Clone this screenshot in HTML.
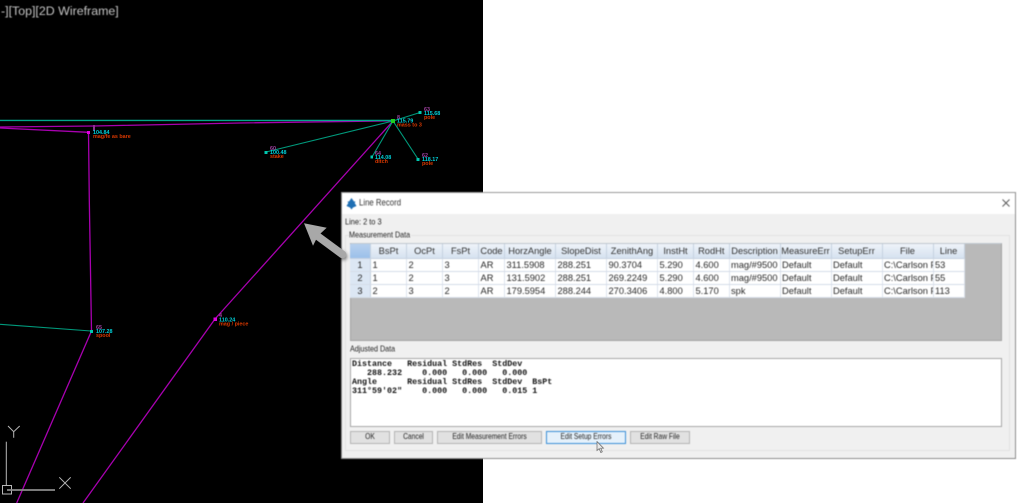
<!DOCTYPE html>
<html><head><meta charset="utf-8">
<style>
html,body{margin:0;padding:0;background:#fff;width:1024px;height:503px;overflow:hidden;font-family:"Liberation Sans",sans-serif}
#cad{position:absolute;left:0;top:0;width:482.5px;height:503px;background:#000}
#cad svg{position:absolute;left:0;top:0;filter:blur(.35px)}
#vp{position:absolute;left:1px;top:3px;font-size:12.4px;line-height:16px;color:#c4c4c4;white-space:nowrap;filter:blur(.4px)}
#dlg{position:absolute;left:341px;top:192px;width:673px;height:265px;background:#f0f0f0;border:1px solid #8c8c8c;border-top-color:#9a9a9a;filter:blur(.45px);color:#222}
#tb{position:absolute;left:0;top:0;width:673px;height:21px;background:#fff}
.t{position:absolute;white-space:nowrap;font-size:7.4px;line-height:10px;color:#222;transform:scaleY(1.15);transform-origin:0 50%}
#fs{position:absolute;left:3px;top:42px;width:665px;height:216px;border:1px solid #e2e2e2;box-sizing:border-box}
#gray{position:absolute;left:8px;top:50px;width:652px;height:98px;background:#b9b9b9;border:1px solid #a4a4a4;box-sizing:border-box;border-top:1px solid #c0c8d0}
table{position:absolute;left:-1px;top:0;border-collapse:collapse;table-layout:fixed;width:614px;background:#fff;font-size:9.3px;color:#2a2a2a}
th{height:14px;padding:0;font-weight:normal;text-align:center;background:linear-gradient(#eef3f9,#d6e2f0);border-right:1px solid #c6d2e0;border-bottom:1px solid #c6d2e0;overflow:hidden;white-space:nowrap;box-sizing:border-box;color:#333}
td{height:13px;padding:0 0 0 1.5px;border-right:1px solid #dde4ee;border-bottom:1px solid #d5dde8;overflow:hidden;white-space:nowrap;box-sizing:border-box;line-height:12px}
td.h{padding:0;text-align:center;background:#dce7f4;border-right:1px solid #c6d2e0}
th.c{background:linear-gradient(#b6d0ee,#9cc0ea)}
#ta{position:absolute;left:8px;top:165px;width:652px;height:69px;background:#fff;border:1px solid #a8a8a8;box-sizing:border-box}
#ta pre{margin:0;position:absolute;left:1px;top:1px;font-family:"Liberation Mono",monospace;font-weight:bold;font-size:8.36px;line-height:9.1px;color:#111}
.b{position:absolute;top:238px;height:13px;box-sizing:border-box;background:#e1e1e1;border:1px solid #b4b4b4;text-align:center;font-size:6.7px;line-height:12px;color:#222;white-space:nowrap}
.b span{display:inline-block;transform:scaleY(1.22)}
</style></head>
<body>
<div id="cad">
<svg width="483" height="503" viewBox="0 0 483 503" fill="none">
<g stroke="#a800b0" stroke-width="1.3">
<path d="M0 127 L94 126 L240 123 L393 120.8"/>
<path d="M0 128 L88.5 132.3"/>
<path d="M88.5 132 L89.3 200 L91.5 331 L16.7 503"/>
<path d="M83 503 L215 319 L393 121"/>
</g>
<path d="M0 120.4H393" stroke="#00a88c" stroke-width="1.4"/>
<g stroke="#009a7c" stroke-width="1.1">
<path d="M393 121L266 152"/><path d="M393 121L372 157"/><path d="M393 121L418 159"/><path d="M393 121L420 112.5"/>
<path d="M0 324.3L91 331"/>
</g>
<rect x="391" y="119" width="4" height="4" fill="#20d020"/>
<g fill="#00c8b0"><rect x="418.5" y="111" width="3" height="3"/><rect x="264.500" y="151" width="3" height="3"/><rect x="370.500" y="155.500" width="2.500" height="3"/><rect x="416.500" y="158" width="3" height="3"/><rect x="90" y="330" width="3" height="3"/></g>
<g fill="#e000e0"><rect x="87" y="131" width="3" height="3"/><rect x="213.500" y="317.500" width="3.500" height="3.500"/></g>
<path d="M94 125v6" stroke="#903090" stroke-width="2"/>
<g font-family="Liberation Sans,sans-serif" font-size="5.400" font-weight="bold">
<g fill="#a040a0">
<text x="397" y="119">8</text><text x="424" y="111">63</text><text x="270" y="150">60</text><text x="375" y="155">64</text><text x="422" y="157">62</text><text x="96" y="329">65</text><text x="219" y="317">4</text>
</g>
<g fill="#00d0d8">
<text x="397" y="122.500">115.79</text><text x="424" y="115">115.68</text><text x="270" y="154">100.48</text><text x="375" y="159">114.08</text><text x="422" y="161">118.17</text><text x="93" y="134">104.84</text><text x="96" y="333">107.28</text><text x="219" y="321.500">110.24</text>
</g>
<g fill="#d83800">
<text x="397" y="126.500">mass to 3</text><text x="424" y="119">pole</text><text x="270" y="158">stake</text><text x="375" y="163">ditch</text><text x="422" y="165">pole</text><text x="93" y="138">mag/fe as bare</text><text x="96" y="337">spool</text><text x="219" y="325.500">mag / piece</text>
</g>
</g>
<g stroke="#b8b8b8" stroke-width="1">
<path d="M8 426L13.700 431.700L19.700 426M13.700 431.700V437.700"/>
<path d="M6.300 441.700V485"/>
<path d="M59.300 477.300L70.700 488.700M70.700 477.300L59.300 488.700"/>
<rect x="2.500" y="485.500" width="9" height="8.500"/>
</g>
<path d="M7 490H55" stroke="#8c8c8c" stroke-width="1.800"/>
</svg>
<div id="vp">-][Top][2D Wireframe]</div>
</div>

<div id="dlg">
<div id="tb"></div>
<svg style="position:absolute;left:4px;top:5px" width="11" height="12" viewBox="0 0 11 12"><path d="M5.500 0L8 3.500L9.500 3.500L8.700 5L10.500 8L7 9.500L5.500 11.500L4 9.500L.5 8L2.300 5L1.500 3.500L3 3.500Z" fill="#1f6fb4"/></svg>
<div class="t" style="left:17px;top:5px;font-size:7.800px;color:#333">Line Record</div>
<svg style="position:absolute;left:660px;top:6px" width="8" height="8" viewBox="0 0 8 8"><path d="M.5 .5L7.500 7.500M7.500 .5L.500 7.500" stroke="#555" stroke-width=".9"/></svg>
<div class="t" style="left:3px;top:24px">Line: 2 to 3</div>
<div id="fs"></div>
<div class="t" style="left:7px;top:37px;background:#f0f0f0;padding-right:1px;font-size:7.200px">Measurement Data</div>
<div id="gray">
<table>
<colgroup><col style="width:20.500px"><col style="width:36px"><col style="width:36px"><col style="width:36px"><col style="width:26px"><col style="width:51px"><col style="width:51px"><col style="width:51px"><col style="width:36px"><col style="width:35.500px"><col style="width:51px"><col style="width:51px"><col style="width:51px"><col style="width:51px"><col style="width:31px"></colgroup>
<tr><th class="c"></th><th>BsPt</th><th>OcPt</th><th>FsPt</th><th>Code</th><th>HorzAngle</th><th>SlopeDist</th><th>ZenithAng</th><th>InstHt</th><th>RodHt</th><th>Description</th><th>MeasureErr</th><th>SetupErr</th><th>File</th><th>Line</th></tr>
<tr><td class="h">1</td><td>1</td><td>2</td><td>3</td><td>AR</td><td>311.5908</td><td>288.251</td><td>90.3704</td><td>5.290</td><td>4.600</td><td>mag/#9500</td><td>Default</td><td>Default</td><td>C:\Carlson Projects</td><td>53</td></tr>
<tr><td class="h">2</td><td>1</td><td>2</td><td>3</td><td>AR</td><td>131.5902</td><td>288.251</td><td>269.2249</td><td>5.290</td><td>4.600</td><td>mag/#9500</td><td>Default</td><td>Default</td><td>C:\Carlson Projects</td><td>55</td></tr>
<tr><td class="h">3</td><td>2</td><td>3</td><td>2</td><td>AR</td><td>179.5954</td><td>288.244</td><td>270.3406</td><td>4.800</td><td>5.170</td><td>spk</td><td>Default</td><td>Default</td><td>C:\Carlson Projects</td><td>113</td></tr>
</table>
</div>
<div class="t" style="left:8px;top:151px;font-size:7.200px">Adjusted Data</div>
<div id="ta"><pre>Distance   Residual StdRes  StdDev
   288.232    0.000   0.000   0.000
Angle      Residual StdRes  StdDev  BsPt
311°59'02"    0.000   0.000   0.015 1</pre></div>
<div class="b" style="left:8px;width:40px"><span>OK</span></div>
<div class="b" style="left:52px;width:39px"><span>Cancel</span></div>
<div class="b" style="left:95px;width:105px"><span>Edit Measurement Errors</span></div>
<div class="b" style="left:204px;width:80px;background:#e5f1fb;border-color:#3c90d8"><span>Edit Setup Errors</span></div>
<div class="b" style="left:288px;width:60px"><span>Edit Raw File</span></div>
</div>

<svg style="position:absolute;left:296px;top:215px;filter:drop-shadow(1px 2px 1.500px rgba(0,0,0,.45)) blur(.3px)" width="60" height="50" viewBox="296 215 60 50">
<path d="M304 223.300L326.700 227.700L320.500 233.500L345 251.500Q347.500 254 345.500 257Q343 259.500 340 257.500L316 239.800L313 245.700Z" fill="#a8a8a8"/>
</svg>
<svg style="position:absolute;left:596px;top:441px" width="9" height="13" viewBox="0 0 9 13"><path d="M1 .5V9.500L3.200 7.600L4.800 11.500L6.300 10.800L4.700 7.200H7.500Z" fill="#e8e8e8" stroke="#666" stroke-width=".7"/></svg>
</body></html>
